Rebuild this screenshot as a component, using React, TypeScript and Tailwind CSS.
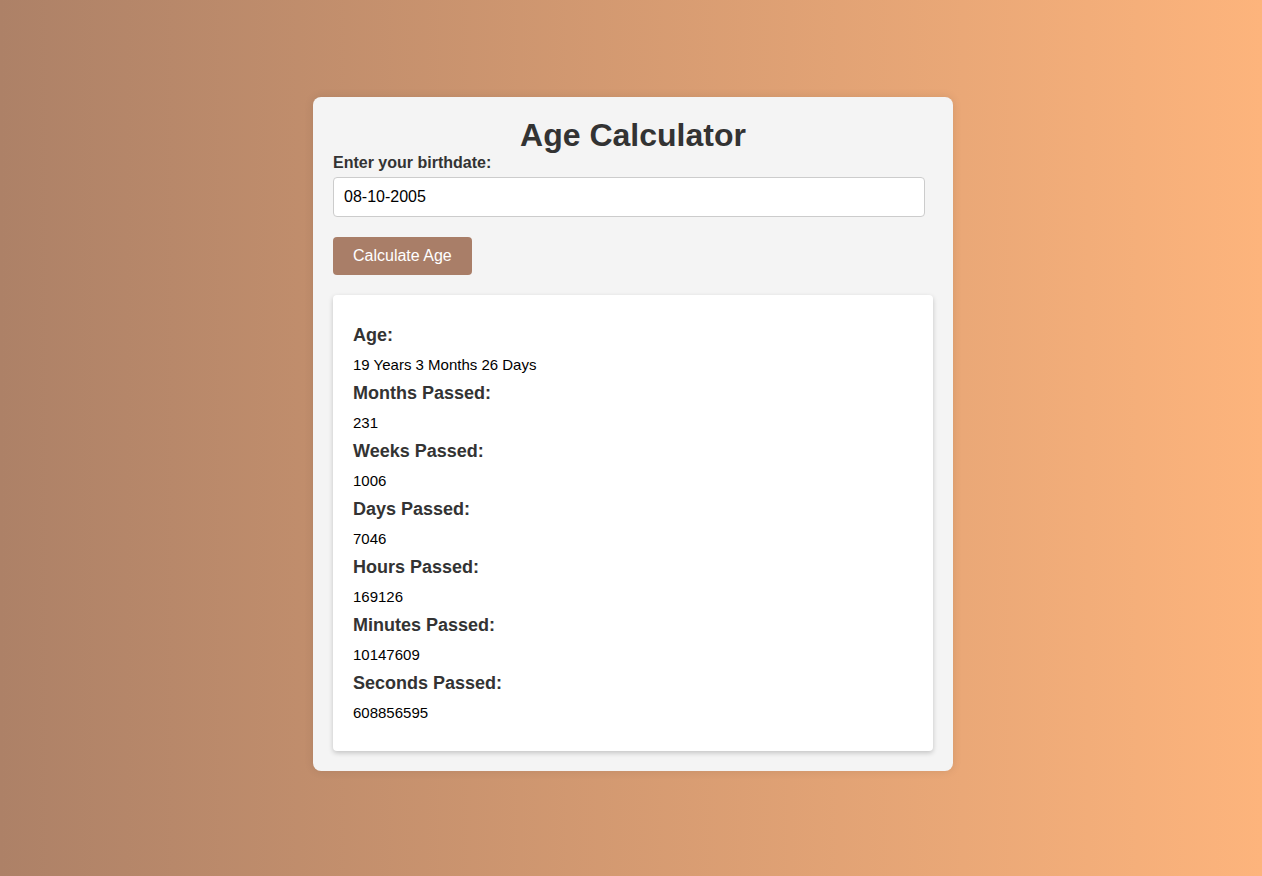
import React from "react";

const items: [string, string][] = [
  ["Age:", "19 Years 3 Months 26 Days"],
  ["Months Passed:", "231"],
  ["Weeks Passed:", "1006"],
  ["Days Passed:", "7046"],
  ["Hours Passed:", "169126"],
  ["Minutes Passed:", "10147609"],
  ["Seconds Passed:", "608856595"],
];

export default function App() {
  return (
    <div
      className="min-h-screen w-full bg-[linear-gradient(to_right,#ad8167,#fdb47c)] flex justify-center pt-[97px] pl-[4px]"
      style={{ fontFamily: '"Liberation Sans", Arial, sans-serif' }}
    >
      <div className="w-[640px] h-fit bg-[#f4f4f4] rounded-[8px] p-[20px] shadow-[0_0_10px_rgba(0,0,0,0.1)]">
        <h1 className="text-[32px] leading-[37px] font-bold text-[#333] text-center">Age Calculator</h1>
        <label className="block text-[16px] leading-[18px] font-bold text-[#333]">Enter your birthdate:</label>
        <div className="mt-[5px] w-[592px] h-[40px] bg-white border border-[#ccc] rounded-[4px] px-[10px] flex items-center text-[16px] text-black">
          08-10-2005
        </div>
        <button className="mt-[20px] h-[38px] px-[20px] bg-[#a97e68] text-white text-[16px] rounded-[4px]">
          Calculate Age
        </button>
        <div className="mt-[20px] bg-white rounded-[4px] shadow-[0_2px_5px_rgba(0,0,0,0.2)] px-[20px] py-[30px] flex flex-col gap-[10px]">
          {items.map(([h, v]) => (
            <React.Fragment key={h}>
              <h3 className="text-[18px] leading-[21px] font-bold text-[#333]">{h}</h3>
              <p className="text-[15px] leading-[17px] text-black">{v}</p>
            </React.Fragment>
          ))}
        </div>
      </div>
    </div>
  );
}
